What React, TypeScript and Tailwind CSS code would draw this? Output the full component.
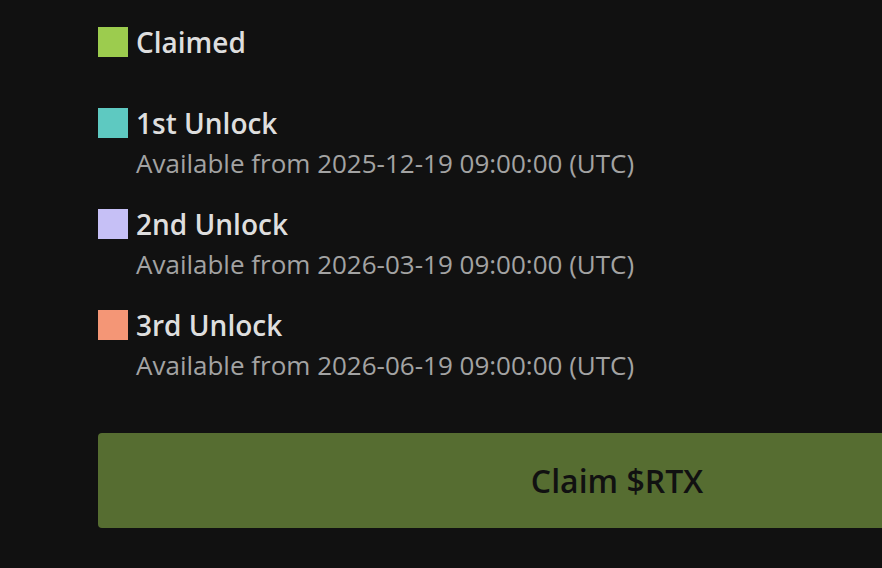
const unlocks = [
  { label: '1st Unlock', color: 'bg-[#5ec9c1]', date: '2025-12-19 09:00:00' },
  { label: '2nd Unlock', color: 'bg-[#c6c0f6]', date: '2026-03-19 09:00:00' },
  { label: '3rd Unlock', color: 'bg-[#f49676]', date: '2026-06-19 09:00:00' },
]

function LegendRow({ label, color }: { label: string; color: string }) {
  return (
    <div className="flex h-[30px] items-center gap-[8px]">
      <span className={`h-[30px] w-[30px] shrink-0 ${color}`} />
      <span className="text-[28px] font-semibold leading-[30px] text-[#dedede]">{label}</span>
    </div>
  )
}

export default function App() {
  return (
    <div
      className="h-screen w-screen overflow-hidden bg-[#111111] pl-[98px] pt-[27px]"
      style={{ fontFamily: '"Open Sans", "Noto Sans", sans-serif' }}
    >
      <LegendRow label="Claimed" color="bg-[#9ccc4e]" />
      <div className="mt-[51px] flex flex-col gap-[31px]">
        {unlocks.map((u) => (
          <div key={u.label}>
            <LegendRow label={u.label} color={u.color} />
            <div className="mt-[10px] pl-[38px] text-[26px] leading-[30px] text-[#a3a3a3]">
              Available from {u.date} (UTC)
            </div>
          </div>
        ))}
      </div>
      <button className="mt-[53px] flex h-[95px] w-[1038px] shrink-0 items-center justify-center rounded-[4px] bg-[#566d31] text-[32px] font-semibold text-[#111111]">
        Claim $RTX
      </button>
    </div>
  )
}
